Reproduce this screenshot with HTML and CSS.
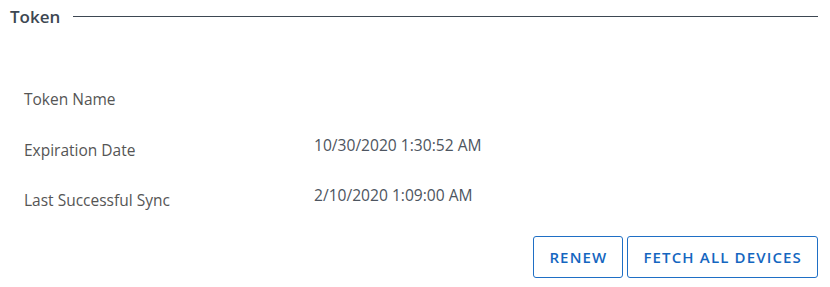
FILE: index.html
```html
<!DOCTYPE html>
<html lang="en">
<head>
    <meta charset="UTF-8">
    <meta name="viewport" content="width=device-width, initial-scale=1.0">
    <title>Token</title>
    <link rel="stylesheet" href="styles.css">
</head>
<body>
    <div class="panel">
        <div class="panel-header">
            <span class="panel-title">Token</span>
            <span class="panel-rule"></span>
        </div>
        <div class="details">
            <div class="row">
                <span class="label">Token Name</span>
                <span class="value"></span>
            </div>
            <div class="row">
                <span class="label">Expiration Date</span>
                <span class="value">10/30/2020 1:30:52 AM</span>
            </div>
            <div class="row">
                <span class="label">Last Successful Sync</span>
                <span class="value">2/10/2020 1:09:00 AM</span>
            </div>
        </div>
        <div class="actions">
            <button class="btn">RENEW</button>
            <button class="btn">FETCH ALL DEVICES</button>
        </div>
    </div>
</body>
</html>
```

FILE: styles.css
```css
body {
    font-family: "Open Sans", Arial, sans-serif;
    margin: 0;
    background-color: #fff;
    color: #555;
}
.panel {
    width: 808px;
    padding: 5px 12px 0 10px;
}
.panel-header {
    display: flex;
    align-items: center;
    height: 22px;
}
.panel-title {
    font-size: 17px;
    font-weight: 600;
    color: #3d4752;
}
.panel-rule {
    flex: 1;
    height: 1px;
    margin-left: 13px;
    background-color: #3d4752;
}
.details {
    padding: 62px 0 0 14px;
}
.row {
    display: grid;
    grid-template-columns: 290px 1fr;
    height: 50.5px;
}
.label {
    font-size: 15.5px;
    line-height: 20px;
    color: #555;
}
.value {
    font-size: 15.6px;
    line-height: 20px;
    color: #4d5560;
    margin-top: -5px;
}
.actions {
    display: flex;
    justify-content: flex-end;
    gap: 4px;
    margin-top: -4.5px;
}
.btn {
    font-family: "Open Sans", Arial, sans-serif;
    font-size: 15px;
    font-weight: 600;
    letter-spacing: 1.15px;
    color: #1466c0;
    background: #fff;
    border: 1px solid #1f6fc5;
    border-radius: 3px;
    height: 42px;
    padding: 0 15px;
    cursor: pointer;
}
```
